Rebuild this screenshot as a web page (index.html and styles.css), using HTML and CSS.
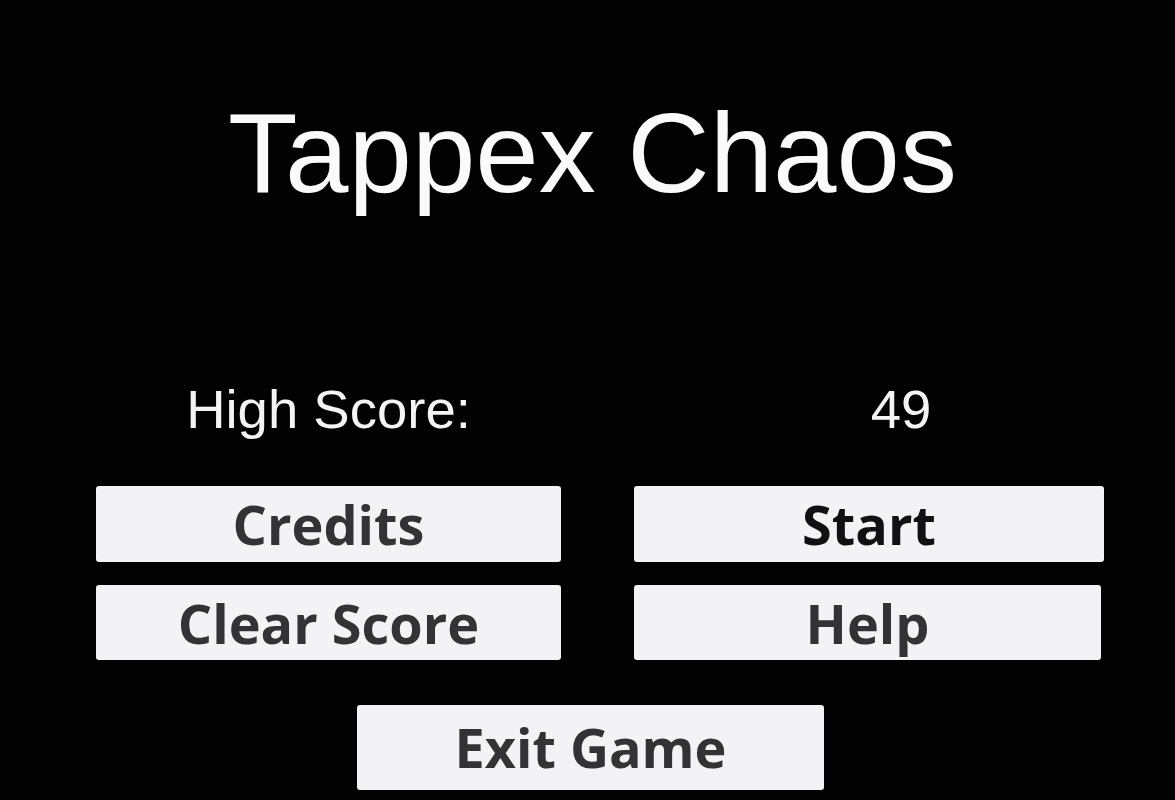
FILE: index.html
```html
<!DOCTYPE html>
<html>
<head>
<meta charset="utf-8">
<title>Tappex Chaos</title>
<link rel="stylesheet" href="styles.css">
</head>
<body>
<main class="screen">
  <h1 class="title">Tappex Chaos</h1>
  <section class="score-row">
    <div class="score-label">High Score:</div>
    <div class="score-value">49</div>
  </section>
  <section class="menu">
    <button class="btn">Credits</button>
    <button class="btn btn-start">Start</button>
    <button class="btn btn-low">Clear Score</button>
    <button class="btn btn-low btn-help">Help</button>
  </section>
  <div class="exit-wrap">
    <button class="btn btn-exit">Exit Game</button>
  </div>
</main>
</body>
</html>
```
FILE: styles.css
```css
html, body {
  margin: 0;
  padding: 0;
  background: #020203;
  height: 100%;
  overflow: hidden;
}
.screen {
  width: 1175px;
  height: 800px;
  display: flex;
  flex-direction: column;
}
.title {
  margin: 0;
  padding-top: 91px;
  text-align: center;
  font-family: "Liberation Sans", Arial, sans-serif;
  font-weight: normal;
  font-size: 114px;
  line-height: 124px;
  color: #fafafa;
  padding-left: 10px;
}
.score-row {
  margin-top: 165px;
  display: grid;
  grid-template-columns: 465px 470px;
  column-gap: 73px;
  padding-left: 96px;
  font-family: "Liberation Sans", Arial, sans-serif;
  font-size: 54.5px;
  line-height: 60px;
  color: #f4f4f4;
}
.score-label {
  text-align: center;
}
.score-value {
  text-align: center;
  padding-left: 64px;
}
.menu {
  margin-top: 46px;
  display: grid;
  grid-template-columns: 465px 470px;
  column-gap: 73px;
  row-gap: 23px;
  padding-left: 96px;
}
.btn {
  display: block;
  border: none;
  margin: 0;
  padding: 0;
  height: 76px;
  background: #f3f3f5;
  border-radius: 3px;
  font-family: "Open Sans", "Noto Sans", sans-serif;
  font-weight: bold;
  font-size: 54px;
  line-height: 76px;
  color: #333336;
  text-align: center;
}
.btn-low {
  height: 75px;
}
.btn-start {
  color: #111113;
}
.btn-help {
  width: 467px;
}
.exit-wrap {
  margin-top: 45px;
  padding-left: 357px;
}
.btn-exit {
  width: 467px;
  height: 85px;
  line-height: 85px;
}
```
